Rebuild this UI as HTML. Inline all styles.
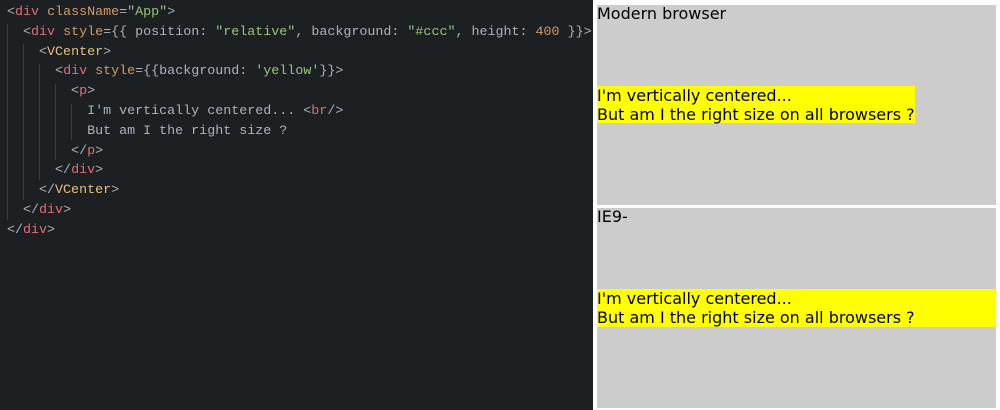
<!DOCTYPE html>
<html><head><style>
html,body{margin:0;padding:0;width:1000px;height:410px;background:#fff;overflow:hidden;position:relative}
#code{position:absolute;left:0;top:0;width:593px;height:410px;background:#1d2023;font-family:"Liberation Mono",monospace;font-size:13.35px;line-height:19.8px;color:#abb2bf;padding-top:3px;box-sizing:border-box}
.l{white-space:pre;padding-left:7px;position:relative;height:19.8px}
.t{color:#e06c75}.a{color:#d19a66}.s{color:#98c379}.c{color:#e5c07b}
.g{position:absolute;width:1px;background:#3b3f45}
.p{position:absolute;left:597px;width:399px;height:200px;background:#ccc;font-family:"DejaVu Sans",sans-serif;font-size:16px;line-height:19px;color:#000}
.p .h{position:absolute;left:0;top:-1px}
.y{position:absolute;left:0;background:#ff0;padding-top:0}
</style></head><body>
<div id="code">
<div class="g" style="left:7px;top:24px;height:196px"></div>
<div class="g" style="left:23px;top:44px;height:156px"></div>
<div class="g" style="left:39px;top:64px;height:116px"></div>
<div class="g" style="left:55px;top:84px;height:76px"></div>
<div class="g" style="left:71px;top:104px;height:36px"></div>
<div class="l">&lt;<span class="t">div</span> <span class="a">className</span>=<span class="s">"App"</span>&gt;</div>
<div class="l">  &lt;<span class="t">div</span> <span class="a">style</span>={{ position: <span class="s">"relative"</span>, background: <span class="s">"#ccc"</span>, height: <span class="a">400</span> }}&gt;</div>
<div class="l">    &lt;<span class="c">VCenter</span>&gt;</div>
<div class="l">      &lt;<span class="t">div</span> <span class="a">style</span>={{background: <span class="s">'yellow'</span>}}&gt;</div>
<div class="l">        &lt;<span class="t">p</span>&gt;</div>
<div class="l">          I'm vertically centered... &lt;<span class="t">br</span>/&gt;</div>
<div class="l">          But am I the right size ?</div>
<div class="l">        &lt;/<span class="t">p</span>&gt;</div>
<div class="l">      &lt;/<span class="t">div</span>&gt;</div>
<div class="l">    &lt;/<span class="c">VCenter</span>&gt;</div>
<div class="l">  &lt;/<span class="t">div</span>&gt;</div>
<div class="l">&lt;/<span class="t">div</span>&gt;</div>
</div>
<div class="p" style="top:5px"><div class="h">Modern browser</div>
<div class="y" style="top:81px;height:37px">I'm vertically centered...<br>But am I the right size on all browsers ?</div></div>
<div class="p" style="top:208px"><div class="h">IE9-</div>
<div class="y" style="top:81px;height:38px;width:399px">I'm vertically centered...<br>But am I the right size on all browsers ?</div></div>
</body></html>
